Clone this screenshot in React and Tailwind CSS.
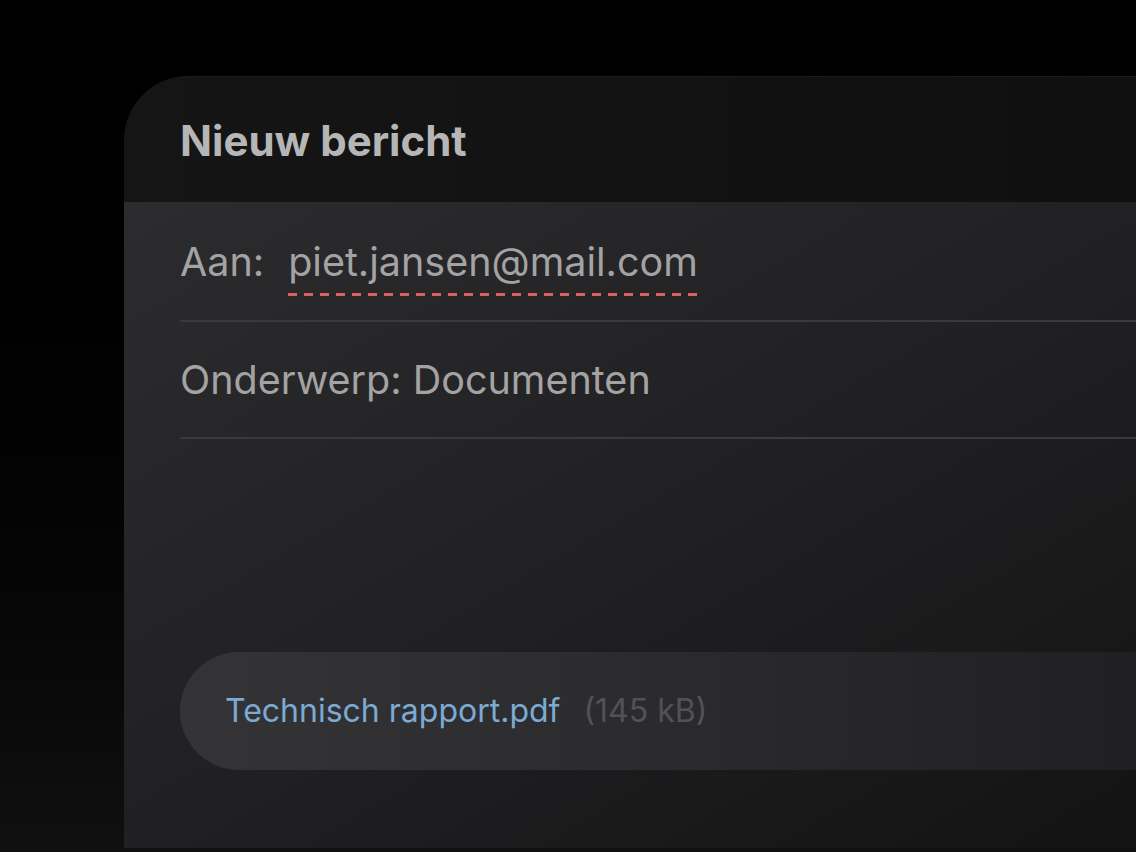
export default function App() {
  return (
    <div
      className="w-[1136px] h-[852px] overflow-hidden bg-gradient-to-b from-[#000000] to-[#101010] pt-[76px] pl-[124px]"
      style={{ fontFamily: "Inter, 'Noto Sans', sans-serif" }}
    >
      <div className="w-[1100px] h-[772px] rounded-tl-[64px] overflow-hidden flex flex-col">
        <div className="h-[126px] shrink-0 bg-gradient-to-r from-[#151515] to-[#0f0f0f] border-t border-[#1c1c1c] flex items-center pl-[56px] pt-[2px]">
          <h1 className="text-[42px] font-bold text-[#b6b6b6] leading-none">Nieuw bericht</h1>
        </div>
        <div className="flex-1 bg-gradient-to-br from-[#2c2c2e] via-[#202022] to-[#121213] pl-[56px] flex flex-col">
          <div className="h-[120px] border-b-2 border-[#3a3a3c] flex items-center pt-[3px] text-[39.5px] text-[#a3a3a3] leading-none">
            <span>Aan:</span>
            <span className="ml-[24px] relative">
              piet.jansen@mail.com
              <span className="absolute left-0 right-0 top-[50px] h-[3px] bg-[repeating-linear-gradient(to_right,#d86262_0,#d86262_9px,transparent_9px,transparent_16px)]"></span>
            </span>
          </div>
          <div className="h-[117px] border-b-2 border-[#3a3a3c] flex items-center pt-[2px] text-[39.5px] text-[#a3a3a3] leading-none">
            Onderwerp: Documenten
          </div>
          <div className="mt-[213px] h-[118px] rounded-l-full bg-gradient-to-r from-[#343437] via-[#2a2a2c] to-[#1e1e20] flex items-center pl-[45px] text-[32px] leading-none">
            <span className="text-[#7baad3]">Technisch rapport.pdf</span>
            <span className="ml-[23px] text-[#525255]">(145 kB)</span>
          </div>
        </div>
      </div>
    </div>
  );
}
